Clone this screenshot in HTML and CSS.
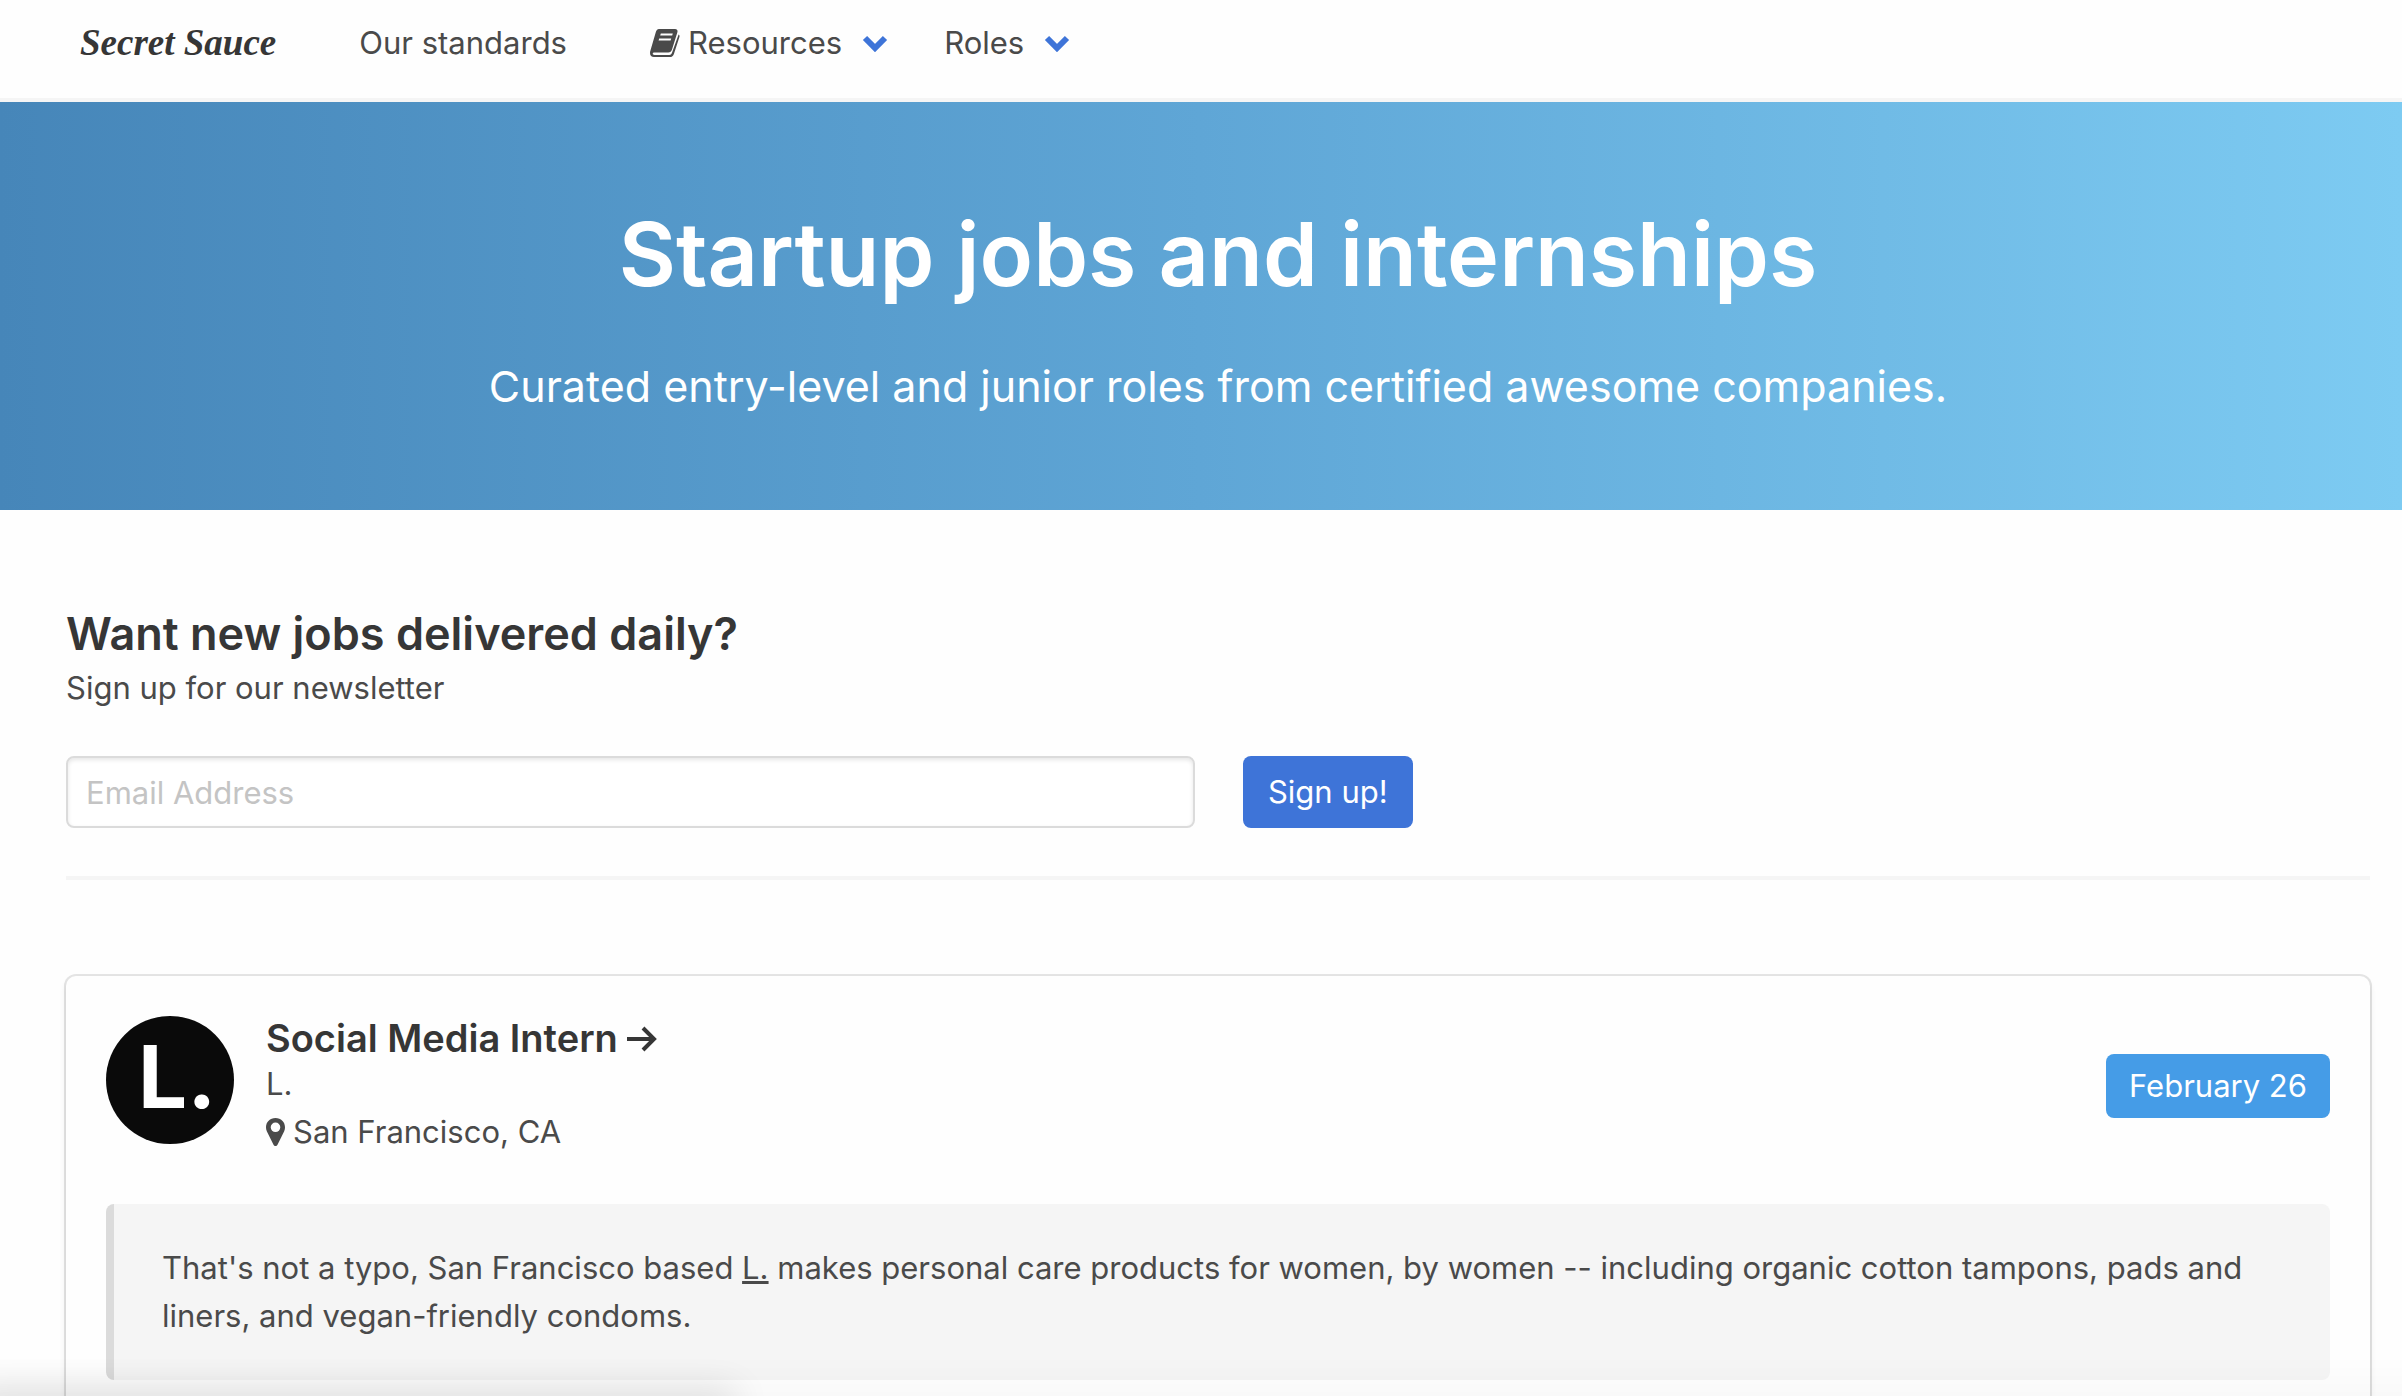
FILE: index.html
```html
<!DOCTYPE html>
<html lang="en">
<head>
    <meta charset="UTF-8">
    <meta name="viewport" content="width=device-width, initial-scale=1.0">
    <title>Secret Sauce</title>
    <link rel="stylesheet" href="styles.css">
</head>
<body>
    <nav class="navbar">
        <a href="#" class="brand">Secret Sauce</a>
        <a href="#" class="nav-item">Our standards</a>
        <div class="nav-menus">
            <button type="button" class="nav-item">
                <svg class="book" viewBox="0 0 30 28" aria-hidden="true">
                    <path fill="#4a4a4a" fill-rule="evenodd" d="M9 0h16c2 0 3 1.300 2.400 3.200L22 20.500c-.6 2-1.800 3-3.800 3H4.500c-1 0-1.800.4-1.800 1.300 0 .8.600 1.100 1.800 1.100h14.900c1.200 0 2-.6 2.500-1.900L28.600 5.500c.9.500 1.200 1.300.8 2.400l-5.500 17c-.6 1.900-2 3.100-4.200 3.100H4C1.500 28 0 26.500 0 24c0-1 .2-2 .6-3L5.700 3.500C6.400 1.200 7.200 0 9 0zM10.800 4.500l-.6 2h12l.6-2zM9.200 9.500l-.6 2h12l.6-2z"/>
                </svg>
                Resources
                <svg class="chevron" viewBox="0 0 26 17" aria-hidden="true"><path d="M3 3l10 10L23 3"/></svg>
            </button>
            <button type="button" class="nav-item">
                Roles
                <svg class="chevron" viewBox="0 0 26 17" aria-hidden="true"><path d="M3 3l10 10L23 3"/></svg>
            </button>
        </div>
    </nav>

    <header class="hero">
        <h1>Startup jobs and internships</h1>
        <p class="subtitle">Curated entry-level and junior roles from certified awesome companies.</p>
    </header>

    <main class="content">
        <form class="signup">
            <h2>Want new jobs delivered daily?</h2>
            <label for="email">Sign up for our newsletter</label>
            <div class="signup-row">
                <input type="email" id="email" placeholder="Email Address">
                <button type="submit" class="signup-button">Sign up!</button>
            </div>
        </form>

        <hr>

        <article class="job">
            <div class="job-header">
                <svg class="job-logo" viewBox="0 0 128 128" role="img" aria-label="L.">
                    <circle cx="64" cy="64" r="64" fill="#0a0a0a"/>
                    <text x="32" y="92">L.</text>
                </svg>
                <div class="job-info">
                    <h3><a href="#">Social Media Intern
                        <svg class="arrow" viewBox="0 0 30 26" aria-hidden="true"><path d="M0 13h27M16 2l11 11-11 11"/></svg></a></h3>
                    <a href="#" class="company">L.</a>
                    <div class="location">
                        <svg class="pin" viewBox="0 0 19 28" aria-hidden="true"><path fill="#4a4a4a" fill-rule="evenodd" d="M9.500 0C15 0 19 4 19 9.300c0 1.500-.2 2.700-.8 3.900l-6.700 13.500c-.8 1.700-3.200 1.700-4 0L.8 13.200C.2 12 0 10.800 0 9.300 0 4 4 0 9.500 0zm0 4.500a4.800 4.800 0 100 9.600 4.800 4.800 0 000-9.600z"/></svg>
                        San Francisco, CA
                    </div>
                </div>
                <span class="tag">February 26</span>
            </div>
            <blockquote>
                That's not a typo, San Francisco based <a href="#">L.</a> makes personal care products for women, by women -- including organic cotton tampons, pads and liners, and vegan-friendly condoms.
            </blockquote>
        </article>
    </main>

    <div class="bottom-shade"></div>
</body>
</html>
```

FILE: styles.css
```css
* {
    box-sizing: border-box;
}
body {
    font-family: Inter, "Liberation Sans", sans-serif;
    font-size: 31px;
    line-height: 48px;
    margin: 0;
    color: #4a4a4a;
    background: #fefefe;
}
h1, h2, h3, p {
    margin: 0;
    font-weight: 600;
}
a {
    color: inherit;
    text-decoration: none;
}
button, input {
    font: inherit;
    margin: 0;
}
.navbar {
    display: flex;
    align-items: center;
    gap: 83px;
    height: 102px;
    padding: 0 32px 12px 80px;
    border-bottom: 4px solid #f5f5f5;
}
.brand {
    font-family: "Liberation Serif", serif;
    font-size: 37px;
    font-weight: bold;
    font-style: italic;
    color: #363636;
}
.nav-menus {
    display: flex;
    gap: 56px;
}
.nav-item {
    display: flex;
    align-items: center;
    padding: 0;
    border: none;
    background: none;
    color: #4a4a4a;
    cursor: pointer;
}
.book {
    width: 30px;
    height: 28px;
    margin-right: 8px;
}
.chevron {
    width: 26px;
    height: 17px;
    margin-left: 20px;
}
.chevron path {
    fill: none;
    stroke: #3e74d8;
    stroke-width: 6;
}
.hero {
    padding: 96px 32px 88px 66px;
    text-align: center;
    color: white;
    background: linear-gradient(90deg, #4686b9 0%, #5fa6d6 50%, #7dcbf2 100%);
}
.hero h1 {
    font-size: 88px;
    line-height: 112px;
}
.subtitle {
    margin-top: 40px;
    font-size: 43px;
    font-weight: 400;
    line-height: 72px;
}
.content {
    padding: 96px 32px 48px 66px;
}
.signup h2 {
    margin-bottom: 2px;
    font-size: 45px;
    line-height: 56px;
    color: #363636;
}
.signup label {
    display: block;
}
.signup-row {
    display: flex;
    gap: 48px;
    margin-top: 44px;
}
.signup input {
    width: 49%;
    height: 72px;
    padding: 0 18px;
    border: 2px solid #dbdbdb;
    border-radius: 8px;
    background: white;
    box-shadow: inset 0 2px 4px rgba(10,10,10,0.1);
}
.signup input::placeholder {
    color: #c4c4c4;
    opacity: 1;
}
.signup-button {
    height: 72px;
    padding: 0 25px;
    border: none;
    border-radius: 8px;
    background: #3e74d8;
    color: white;
    cursor: pointer;
}
hr {
    height: 4px;
    margin: 48px 0 96px;
    border: none;
    background: #f5f5f5;
}
.job {
    padding: 40px;
    border-radius: 10px;
    background: #fefefe;
    box-shadow: 0 4px 6px rgba(10,10,10,0.1), 0 0 0 2px rgba(10,10,10,0.1);
}
.job-header {
    display: flex;
    align-items: center;
    gap: 32px;
    margin-bottom: 48px;
}
.job-logo {
    align-self: flex-start;
    width: 128px;
    height: 128px;
}
.job-logo text {
    font-family: Inter, sans-serif;
    font-size: 87px;
    font-weight: 700;
    fill: white;
}
.job-info {
    flex: 1;
}
.job-info h3 {
    font-size: 38px;
    line-height: 44px;
    color: #363636;
}
.arrow {
    width: 30px;
    height: 26px;
}
.arrow path {
    fill: none;
    stroke: #363636;
    stroke-width: 4;
}
.company {
    display: block;
}
.location {
    display: flex;
    align-items: center;
    gap: 8px;
}
.pin {
    width: 19px;
    height: 28px;
}
.tag {
    padding: 8px 23px;
    border-radius: 8px;
    background: #459ce7;
    color: white;
}
blockquote {
    margin: 0;
    padding: 40px 48px;
    border-left: 8px solid #dbdbdb;
    border-radius: 8px;
    background: #f5f5f5;
}
blockquote a {
    text-decoration: underline;
}
.bottom-shade {
    position: fixed;
    bottom: 0;
    left: 0;
    width: 100%;
    height: 40px;
    pointer-events: none;
    background: linear-gradient(to bottom, rgba(0,0,0,0), rgba(0,0,0,0.02));
}
.bottom-shade::before {
    content: "";
    position: absolute;
    bottom: -8px;
    left: -20px;
    width: 750px;
    height: 4px;
    box-shadow: 0 0 36px 6px rgba(0,0,0,0.2);
}
```
